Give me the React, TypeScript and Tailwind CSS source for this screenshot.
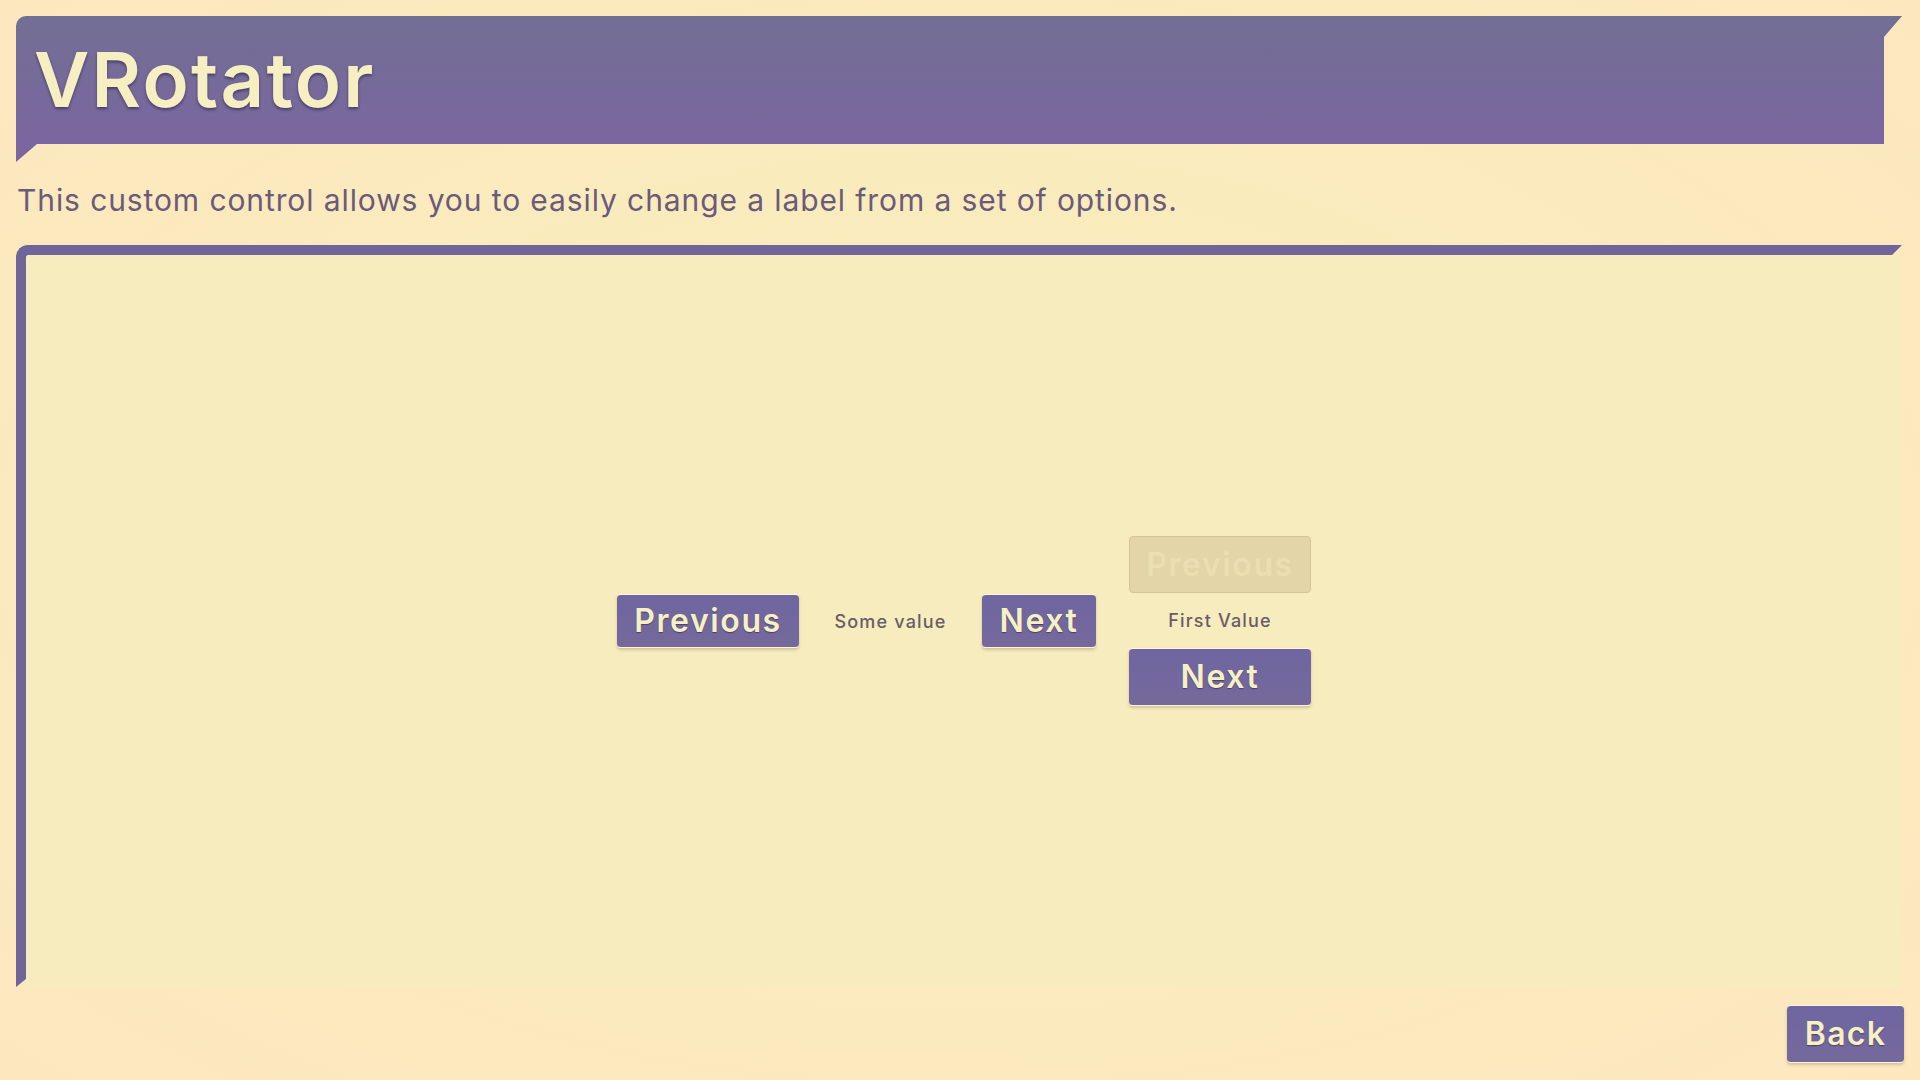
import React from "react";

function Btn({
  children,
  className = "",
  disabled = false,
}: {
  children: React.ReactNode;
  className?: string;
  disabled?: boolean;
}) {
  if (disabled) {
    return (
      <button
        disabled
        className={
          "flex items-center justify-center rounded-[4px] border border-[#d3c59a] bg-[#e3d5a8] font-semibold text-[#eadeb2] " +
          className
        }
      >
        {children}
      </button>
    );
  }
  return (
    <button
      className={
        "flex items-center justify-center rounded-[4px] border-t border-t-[#fff6dc] border-b border-b-[#fff2d6] bg-[linear-gradient(180deg,#6f66a1,#75699b)] font-semibold text-[#f7f0c4] shadow-[0_2px_3px_rgba(90,70,60,0.25)] [text-shadow:0_1px_1px_rgba(40,30,60,0.55)] " +
        className
      }
    >
      {children}
    </button>
  );
}

export default function App() {
  return (
    <div className="flex h-screen w-full flex-col bg-[radial-gradient(ellipse_at_center,#f8ecbc_0%,#faebbd_50%,#fde7bf_100%)] p-4 font-['Inter',sans-serif]">
      {/* Header */}
      <div className="mr-[2px] h-[146px] shrink-0 rounded-tl-[10px] bg-[linear-gradient(180deg,#726f94,#7c65a1)] pl-[18px] pt-[25px] [clip-path:polygon(0_0,100%_0,calc(100%-18px)_21px,calc(100%-18px)_128px,21px_128px,0_100%)]">
        <h1 className="text-[76px] leading-[76px] font-semibold tracking-[0.03em] text-[#f6efc1] [text-shadow:0_2px_3px_rgba(40,30,70,0.6)]">
          VRotator
        </h1>
      </div>

      {/* Description */}
      <p className="mt-[18px] h-[40px] shrink-0 pl-[1px] text-[30px] leading-[40px] tracking-[0.03em] text-[#6c5a7a]">
        This custom control allows you to easily change a label from a set of options.
      </p>

      {/* Panel */}
      <div className="mr-[2px] mt-[25px] flex flex-1 items-center justify-center rounded-tl-[12px] border-l-[10px] border-t-[10px] border-[#6f6598] bg-[#f7ecbe] [clip-path:polygon(0_0,100%_0,calc(100%-10px)_10px,100%_10px,100%_100%,10px_100%,10px_calc(100%-8px),0_100%)]">
        <div className="flex items-center gap-[33px]">
          <div className="flex items-center">
            <Btn className="h-[54px] w-[182px] text-[32px] tracking-[0.05em]">Previous</Btn>
            <div className="w-[183px] text-center text-[18px] font-medium tracking-[0.065em] text-[#6a5c66]">
              Some value
            </div>
            <Btn className="h-[54px] w-[114px] text-[32px] tracking-[0.05em]">Next</Btn>
          </div>
          <div className="flex w-[182px] flex-col">
            <Btn disabled className="h-[57px] w-[182px] text-[32px] tracking-[0.05em]">
              Previous
            </Btn>
            <div className="flex h-[55px] items-center justify-center text-[18px] font-medium tracking-[0.065em] text-[#6a5c66]">
              First Value
            </div>
            <Btn className="h-[58px] w-[182px] text-[32px] tracking-[0.05em]">Next</Btn>
          </div>
        </div>
      </div>

      {/* Footer */}
      <div className="mt-[18px] flex shrink-0 justify-end pb-[1px]">
        <Btn className="h-[58px] w-[117px] text-[32px] tracking-[0.04em]">Back</Btn>
      </div>
    </div>
  );
}
